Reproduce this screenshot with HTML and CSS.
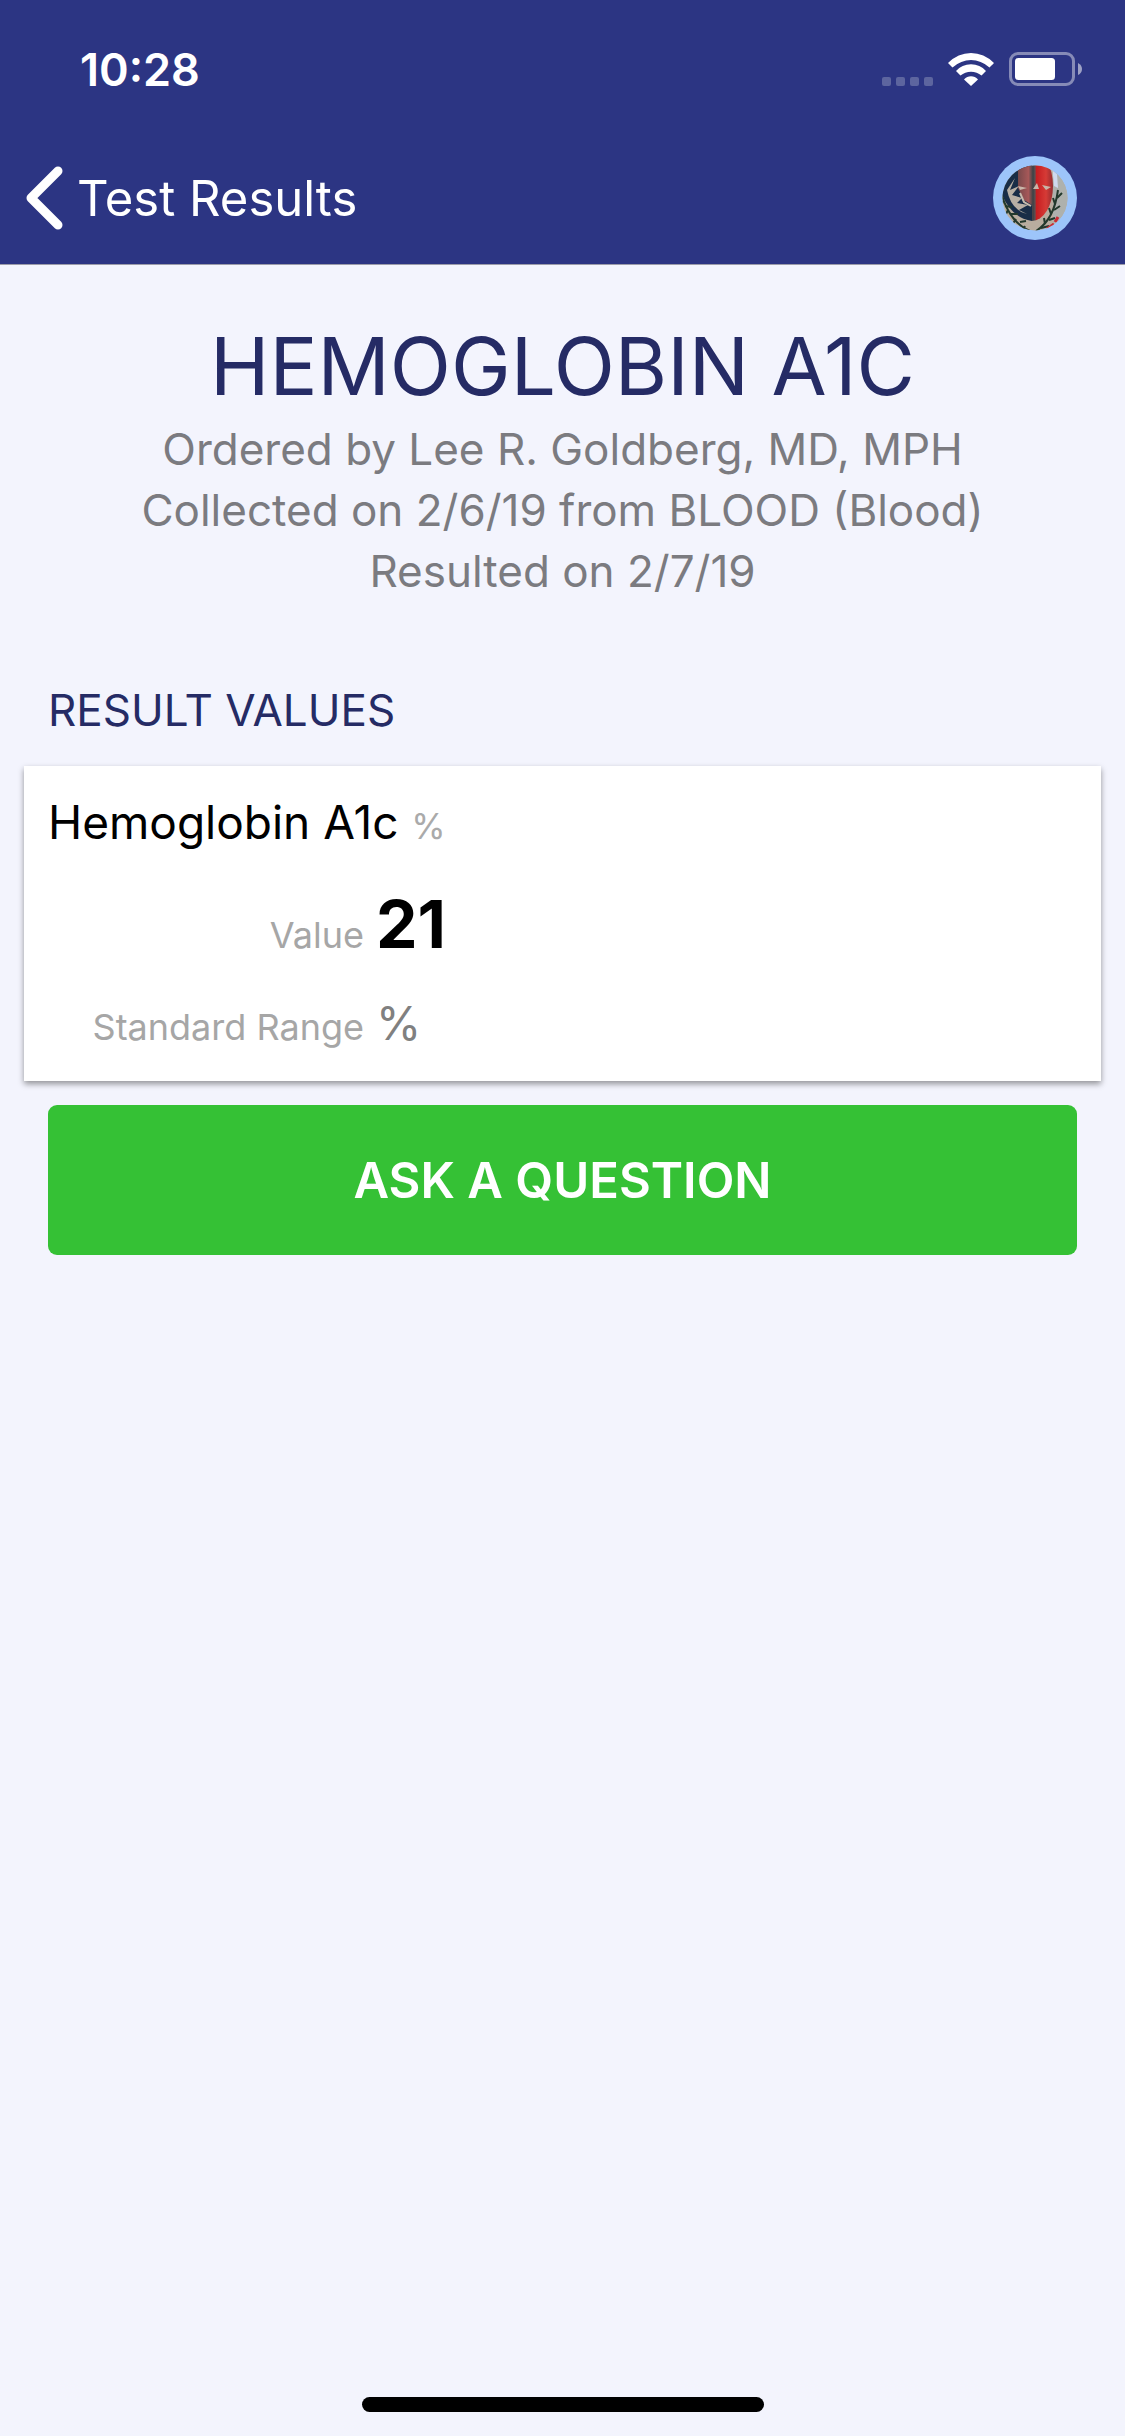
FILE: index.html
```html
<!DOCTYPE html>
<html lang="en">
<head>
<meta charset="utf-8">
<meta name="viewport" content="width=device-width, initial-scale=1">
<title>Hemoglobin A1C</title>
<link rel="stylesheet" href="styles.css">
</head>
<body>
<div class="screen">
  <header class="header">
    <div class="status">
      <span class="time">10:28</span>
      <span class="indicators">
        <svg class="signal" viewBox="0 0 51 9" aria-hidden="true"><rect width="9" height="9" rx="2"/><rect x="14" width="9" height="9" rx="2"/><rect x="28" width="9" height="9" rx="2"/><rect x="42" width="9" height="9" rx="2"/></svg>
        <svg class="wifi" viewBox="0 0 46 33" aria-hidden="true"><path d="M0 10Q10 0 23 0T46 10Q46 10 41.500 14.500Q33 7 23 7T4.500 14.500Z"/><path d="M8 18Q14 11.300 23 11.300T38 18L33.500 22.500Q29 18.700 23 18.700T12.500 22.500Z"/><path d="M16 26.500Q19 23.200 23 23.200T30 26.500L23 33Z"/></svg>
        <svg class="battery" viewBox="0 0 74 34" aria-hidden="true"><rect class="battery-case" x="1.500" y="1.500" width="63" height="31" rx="7.500"/><rect class="battery-level" x="6" y="6" width="40" height="22" rx="3.500"/><path class="battery-tip" d="M69 11Q73 13 73 17T69 23Z"/></svg>
      </span>
    </div>
    <nav class="nav">
      <a class="back" href="#">
        <svg class="chevron" viewBox="0 0 37 64" aria-hidden="true"><path d="M32 5L5 32L32 59"/></svg>
        <span>Test Results</span>
      </a>
      <button class="profile" type="button" aria-label="Profile">
        <svg viewBox="0 0 84 84" aria-hidden="true">
          <defs>
            <clipPath id="photo"><circle cx="42" cy="42" r="32.500"/></clipPath>
            <clipPath id="mask"><ellipse cx="39" cy="30" rx="21" ry="35"/></clipPath>
            <linearGradient id="face"><stop offset="0" stop-color="#78494b"/><stop offset=".3" stop-color="#a65858"/><stop offset=".43" stop-color="#3d4145"/><stop offset=".49" stop-color="#605052"/><stop offset=".52" stop-color="#c61c20"/><stop offset=".8" stop-color="#d63b36"/><stop offset="1" stop-color="#942c30"/></linearGradient>
          </defs>
          <circle cx="42" cy="42" r="42" fill="#9dc5fa"/>
          <g clip-path="url(#photo)">
            <path fill="#b9ad9f" d="M8 8H76V76H8Z"/>
            <path fill="#aeb1ad" d="M60 8H76V76H60Z"/>
            <path fill="#cfd9ee" d="M59 8L64 18L65 32L61 30Z"/>
            <path fill="#192d47" d="M8 8H39V65Q19 62 9 39Z"/>
            <path fill="#b8afa4" d="M14 34L22 22L17 34L26 30L19 39L29 42L24 47L35 49L26 54L34 58Q18 54 14 34Z"/>
            <path fill="url(#face)" clip-path="url(#mask)" d="M25 8H60V65H39V49L31 44L25 32Z"/>
            <path fill="#c9b5a8" d="M25 30L34 32L27 34ZM40 33L44 27L46 33ZM49 29L58 31L53 34Z"/>
            <path fill="none" stroke="#c7bbad" stroke-width="2" d="M27 37L31 46L38 50"/>
            <path fill="none" stroke="#23392c" stroke-width="2" d="M8 37Q17 67 37 75M43 75Q61 64 65 34"/>
            <path fill="none" stroke="#23392c" stroke-width="2" d="M10 45L8 51M12 50L19 51M15 54L12 60M18 58L25 58M23 63L19 69M27 66L33 65M32 70L29 75M48 72L56 70M52 68L51 62M56 64L62 62M58 58L56 52M61 54L67 50M62 48L60 42M64 42L69 37"/>
            <path fill="none" stroke="#c92c35" stroke-width="3" d="M54 73L61 68M62 66L65 61"/>
          </g>
        </svg>
      </button>
    </nav>
  </header>

  <main class="content">
    <section class="summary">
      <h1>HEMOGLOBIN A1C</h1>
      <p>Ordered by Lee R. Goldberg, MD, MPH</p>
      <p>Collected on 2/6/19 from BLOOD (Blood)</p>
      <p>Resulted on 2/7/19</p>
    </section>

    <h2>RESULT VALUES</h2>
    <section class="card">
      <h3>Hemoglobin A1c <span class="unit">%</span></h3>
      <dl class="values">
        <dt>Value</dt><dd class="value">21</dd>
        <dt>Standard Range</dt><dd class="range">%</dd>
      </dl>
    </section>
    <button class="ask" type="button">ASK A QUESTION</button>
  </main>
  <div class="home-indicator"></div>
</div>
</body>
</html>
```
FILE: styles.css
```css
* { box-sizing: border-box; }

body {
  margin: 0;
  background: #f3f4fd;
  font-family: Inter, "Liberation Sans", sans-serif;
}

h1, h2, h3, p, dl, dd {
  margin: 0;
  font-weight: 400;
}

svg { display: block; }

.screen {
  display: flex;
  flex-direction: column;
  min-height: 100vh;
}

.header {
  background: #2c3583;
  border-bottom: 1px solid #9c9caa;
  color: #fff;
}

.status {
  display: flex;
  justify-content: space-between;
  align-items: center;
  height: 132px;
  padding: 6px 42px 0 80px;
}

.time {
  font-size: 45px;
  font-weight: 600;
}

.indicators {
  display: flex;
  align-items: flex-end;
  gap: 15px;
}

.signal {
  width: 51px;
  height: 9px;
  fill: #5d659f;
}

.wifi {
  width: 46px;
  height: 33px;
  fill: #fff;
}

.battery {
  width: 74px;
  height: 34px;
}

.battery-case {
  fill: none;
  stroke: #868bb7;
  stroke-width: 3;
}

.battery-level { fill: #fff; }
.battery-tip { fill: #9da1c5; }

.nav {
  display: flex;
  justify-content: space-between;
  align-items: center;
  height: 132px;
  padding: 0 48px 0 26px;
}

.back {
  display: flex;
  align-items: center;
  gap: 14px;
  color: inherit;
  font-size: 49px;
  text-decoration: none;
}

.chevron {
  width: 37px;
  height: 64px;
  fill: none;
  stroke: #fff;
  stroke-width: 9;
  stroke-linecap: round;
  stroke-linejoin: round;
}

.profile {
  width: 84px;
  height: 84px;
  padding: 0;
  border: 0;
  border-radius: 50%;
  background: none;
}

.content {
  flex: 1;
  padding: 50px 24px;
}

.summary {
  color: #7b7b80;
  font-size: 44px;
  line-height: 61px;
  text-align: center;
}

h1 {
  margin-bottom: 2px;
  color: #252b65;
  font-size: 80px;
  line-height: 102px;
}

h2 {
  margin: 78px 24px 26px;
  color: #252b65;
  font-size: 44px;
  line-height: 60px;
}

.card {
  padding: 24px 24px 10px;
  background: #fff;
  box-shadow: 0 3px 6px rgba(0, 0, 0, .4);
}

h3 {
  color: #000;
  font-size: 46px;
  line-height: 64px;
}

.unit {
  color: #aaa;
  font-size: 35px;
}

.values {
  display: grid;
  grid-template-columns: 316px 1fr;
  align-items: baseline;
  gap: 3px 12px;
  margin-top: 18px;
}

dt {
  color: #a6a6a6;
  font-size: 36px;
  text-align: right;
}

.value {
  color: #000;
  font-size: 66px;
  font-weight: 700;
  line-height: 96px;
}

.range {
  color: #808080;
  font-size: 46px;
  line-height: 96px;
}

.ask {
  display: block;
  width: calc(100% - 48px);
  height: 150px;
  margin: 24px 24px 0;
  border: 0;
  border-radius: 9px;
  background: #35c135;
  color: #fff;
  font-family: inherit;
  font-size: 49px;
  font-weight: 600;
}

.home-indicator {
  width: 402px;
  height: 15px;
  margin: 0 auto 24px;
  border-radius: 8px;
  background: #000;
}
```
